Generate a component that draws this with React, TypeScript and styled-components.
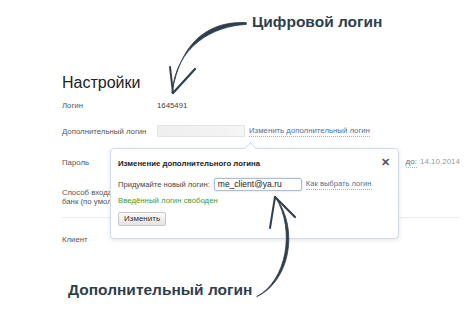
import React from 'react';
import styled, { createGlobalStyle } from 'styled-components';

const Global = createGlobalStyle`
  html, body { margin: 0; padding: 0; background: #fff; }
  body {
    width: 474px; height: 311px; overflow: hidden;
    font-family: "Liberation Sans", Arial, sans-serif;
  }
`;

const Page = styled.div`
  position: relative;
  width: 474px;
  height: 311px;
  box-sizing: border-box;
  padding: 73px 14px 0 62px;
  display: flex;
  flex-direction: column;
`;

const Title = styled.h1`
  margin: 0 0 2px;
  font-size: 16px;
  line-height: 20px;
  font-weight: normal;
  color: #222;
`;

const Row = styled.div<{ $h: number; $sep?: boolean }>`
  display: grid;
  grid-template-columns: 95px 1fr auto;
  align-items: center;
  height: ${p => p.$h}px;
  border-bottom: ${p => (p.$sep ? '1px solid #ececec' : 'none')};
  font-size: 7.8px;
  color: #555;
`;

const Label = styled.div`
  line-height: 9px;
  color: #555;
  white-space: nowrap;
`;

const Value = styled.div`
  color: #444;
  display: flex;
  align-items: center;
`;

const GrayBox = styled.div`
  width: 88px;
  height: 12px;
  background: linear-gradient(90deg, #efefef, #f3f3f3 80%, #f7f7f7);
  border: 1px solid #e4e4e4;
  box-sizing: border-box;
  margin-right: 4px;
`;

const Link = styled.a`
  color: #4f6f95;
  text-decoration: none;
  border-bottom: 1px dotted #9fb2c8;
  line-height: 10px;
  cursor: pointer;
`;

const Date = styled.div`
  color: #9a9a9a;
  display: flex;
  gap: 3px;
  font-size: 8px;
`;

const Popup = styled.div`
  position: absolute;
  left: 110px;
  top: 148px;
  width: 289px;
  height: 91px;
  box-sizing: border-box;
  background: #fff;
  border: 1px solid #d5dde4;
  border-radius: 4px;
  box-shadow: 0 1px 4px rgba(80, 100, 120, 0.18);
  padding: 8px 7px;
  display: flex;
  flex-direction: column;
  align-items: flex-start;
  &::before {
    content: '';
    position: absolute;
    left: 135px;
    top: -5px;
    width: 8px;
    height: 8px;
    background: #fff;
    border-left: 1px solid #d5dde4;
    border-top: 1px solid #d5dde4;
    transform: rotate(45deg);
  }
`;

const PopupTitle = styled.div`
  font-weight: bold;
  font-size: 7.8px;
  line-height: 14px;
  color: #222;
`;

const Close = styled.span`
  position: absolute;
  right: 8px;
  top: 6px;
  font-size: 11px;
  font-weight: bold;
  color: #556;
  line-height: 14px;
`;

const FieldRow = styled.div`
  display: flex;
  align-items: center;
  margin-top: 7px;
  height: 13px;
  font-size: 7.6px;
  color: #444;
`;

const TextInput = styled.div`
  width: 88px;
  height: 13px;
  box-sizing: border-box;
  margin: 0 4px 0 4px;
  border: 1px solid #a8c0d4;
  box-shadow: 0 0 2px rgba(120, 160, 200, 0.5);
  border-radius: 2px;
  padding-left: 3px;
  color: #222;
  font-size: 8.5px;
  line-height: 11px;
`;

const Success = styled.div`
  color: #3f9a2f;
  font-size: 7.8px;
  line-height: 12px;
  margin-top: 4px;
`;

const Button = styled.button`
  margin-top: 5px;
  height: 14px;
  padding: 0 5px;
  font-family: inherit;
  font-size: 8px;
  color: #333;
  border: 1px solid #c9c9c9;
  border-radius: 2px;
  background: linear-gradient(#fafafa, #e4e4e4);
  line-height: 12px;
`;

const Note = styled.div<{ $x: number; $y: number }>`
  position: absolute;
  left: ${p => p.$x}px;
  top: ${p => p.$y}px;
  font-weight: bold;
  font-size: 15.5px;
  line-height: 20px;
  color: #2f3f4b;
  white-space: nowrap;
`;

const Overlay = styled.svg`
  position: absolute;
  left: 0;
  top: 0;
  pointer-events: none;
`;

export default function App() {
  return (
    <>
      <Global />
      <Page>
        <Title>Настройки</Title>
        <Row $h={20}>
          <Label>Логин</Label>
          <Value>1645491</Value>
        </Row>
        <Row $h={32}>
          <Label>Дополнительный логин</Label>
          <Value>
            <GrayBox />
            <Link>Изменить дополнительный логин</Link>
          </Value>
        </Row>
        <Row $h={30}>
          <Label>Пароль</Label>
          <Value />
          <Date>
            <Link>до:</Link>
            <span>14.10.2014</span>
          </Date>
        </Row>
        <Row $h={40} $sep>
          <Label>
            Способ входа в интернет-
            <br />
            банк (по умолчанию)
          </Label>
          <Value />
        </Row>
        <Row $h={42}>
          <Label>Клиент</Label>
          <Value />
        </Row>

        <Popup>
          <PopupTitle>Изменение дополнительного логина</PopupTitle>
          <Close>✕</Close>
          <FieldRow>
            Придумайте новый логин:
            <TextInput>me_client@ya.ru</TextInput>
            <Link>Как выбрать логин</Link>
          </FieldRow>
          <Success>Введённый логин свободен</Success>
          <Button>Изменить</Button>
        </Popup>

        <Note $x={252} $y={12}>Цифровой логин</Note>
        <Note $x={68} $y={280}>Дополнительный логин</Note>

        <Overlay width="474" height="311" viewBox="0 0 474 311">
          <g fill="#2f3f4b" stroke="#2f3f4b" strokeLinecap="round">
            <path d="M246,22.5 C212,21 181,38 172,93 C176,46 213,26 246,24.5 Z" strokeWidth="0.8" />
            <path d="M173,93 L170,67" strokeWidth="2" fill="none" />
            <path d="M173,93 L195,69" strokeWidth="2.2" fill="none" />
            <path d="M257,296.5 C289,282 300,230 275.5,197 C296,231 286,281 257,296.5 Z" strokeWidth="0.8" />
            <path d="M275,197 L270,228" strokeWidth="2" fill="none" />
            <path d="M275,197 L295,217" strokeWidth="2.2" fill="none" />
          </g>
        </Overlay>
      </Page>
    </>
  );
}
